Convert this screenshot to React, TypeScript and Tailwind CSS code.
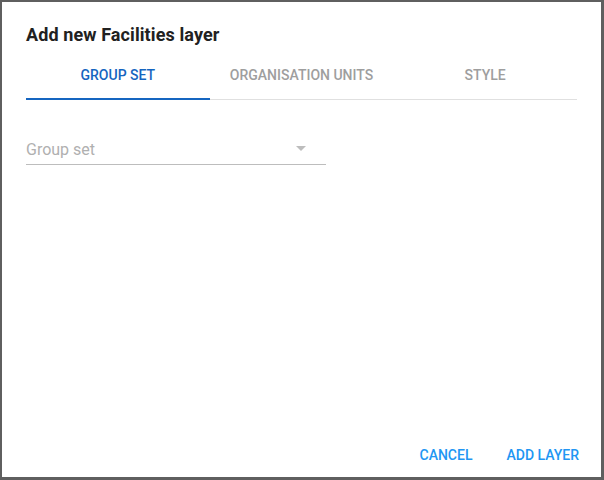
import React from "react";

const tabs = ["Group set", "Organisation units", "Style"];

export default function App() {
  return (
    <div
      className="h-[480px] w-[604px] overflow-hidden bg-[#5f5f5f] pl-[2px] pt-[2px]"
      style={{ fontFamily: "Roboto, 'Liberation Sans', sans-serif" }}
    >
      <div className="flex h-[475px] w-[599px] flex-col bg-white">
        <h3 className="pl-6 pt-[23px] text-[18px] leading-5 font-bold tracking-[0.1px] text-[#212121]">
          Add new Facilities layer
        </h3>

        {/* Tabs */}
        <div className="mx-6 mt-[6px] flex border-b border-[#e0e0e0]">
          {tabs.map((t, i) => (
            <div
              key={t}
              className={
                "relative flex h-[48px] flex-1 items-center justify-center text-[14px] font-medium uppercase " +
                (i === 0 ? "text-[#1565c0]" : "text-[#9e9e9e]")
              }
            >
              {t}
              {i === 0 && (
                <div className="absolute right-0 bottom-[-1px] left-0 h-[2px] bg-[#1565c0]" />
              )}
            </div>
          ))}
        </div>

        {/* Select */}
        <div className="mx-6 mt-[37px] flex h-[28px] w-[300px] items-start justify-between border-b border-[#bdbdbd]">
          <span className="text-[16px] leading-[26px] text-[#b0b0b0]">Group set</span>
          <svg width="10" height="5" viewBox="0 0 10 5" className="mt-[9px] mr-[20px]">
            <path d="M0 0 L10 0 L5 5 Z" fill="#bdbdbd" />
          </svg>
        </div>

        <div className="flex-1" />

        {/* Actions */}
        <div className="flex justify-end gap-[34px] pr-[22px] pb-[11px]">
          <button className="text-[14px] font-medium uppercase text-[#2196f3]">Cancel</button>
          <button className="text-[14px] font-medium uppercase text-[#2196f3]">Add layer</button>
        </div>
      </div>
    </div>
  );
}
